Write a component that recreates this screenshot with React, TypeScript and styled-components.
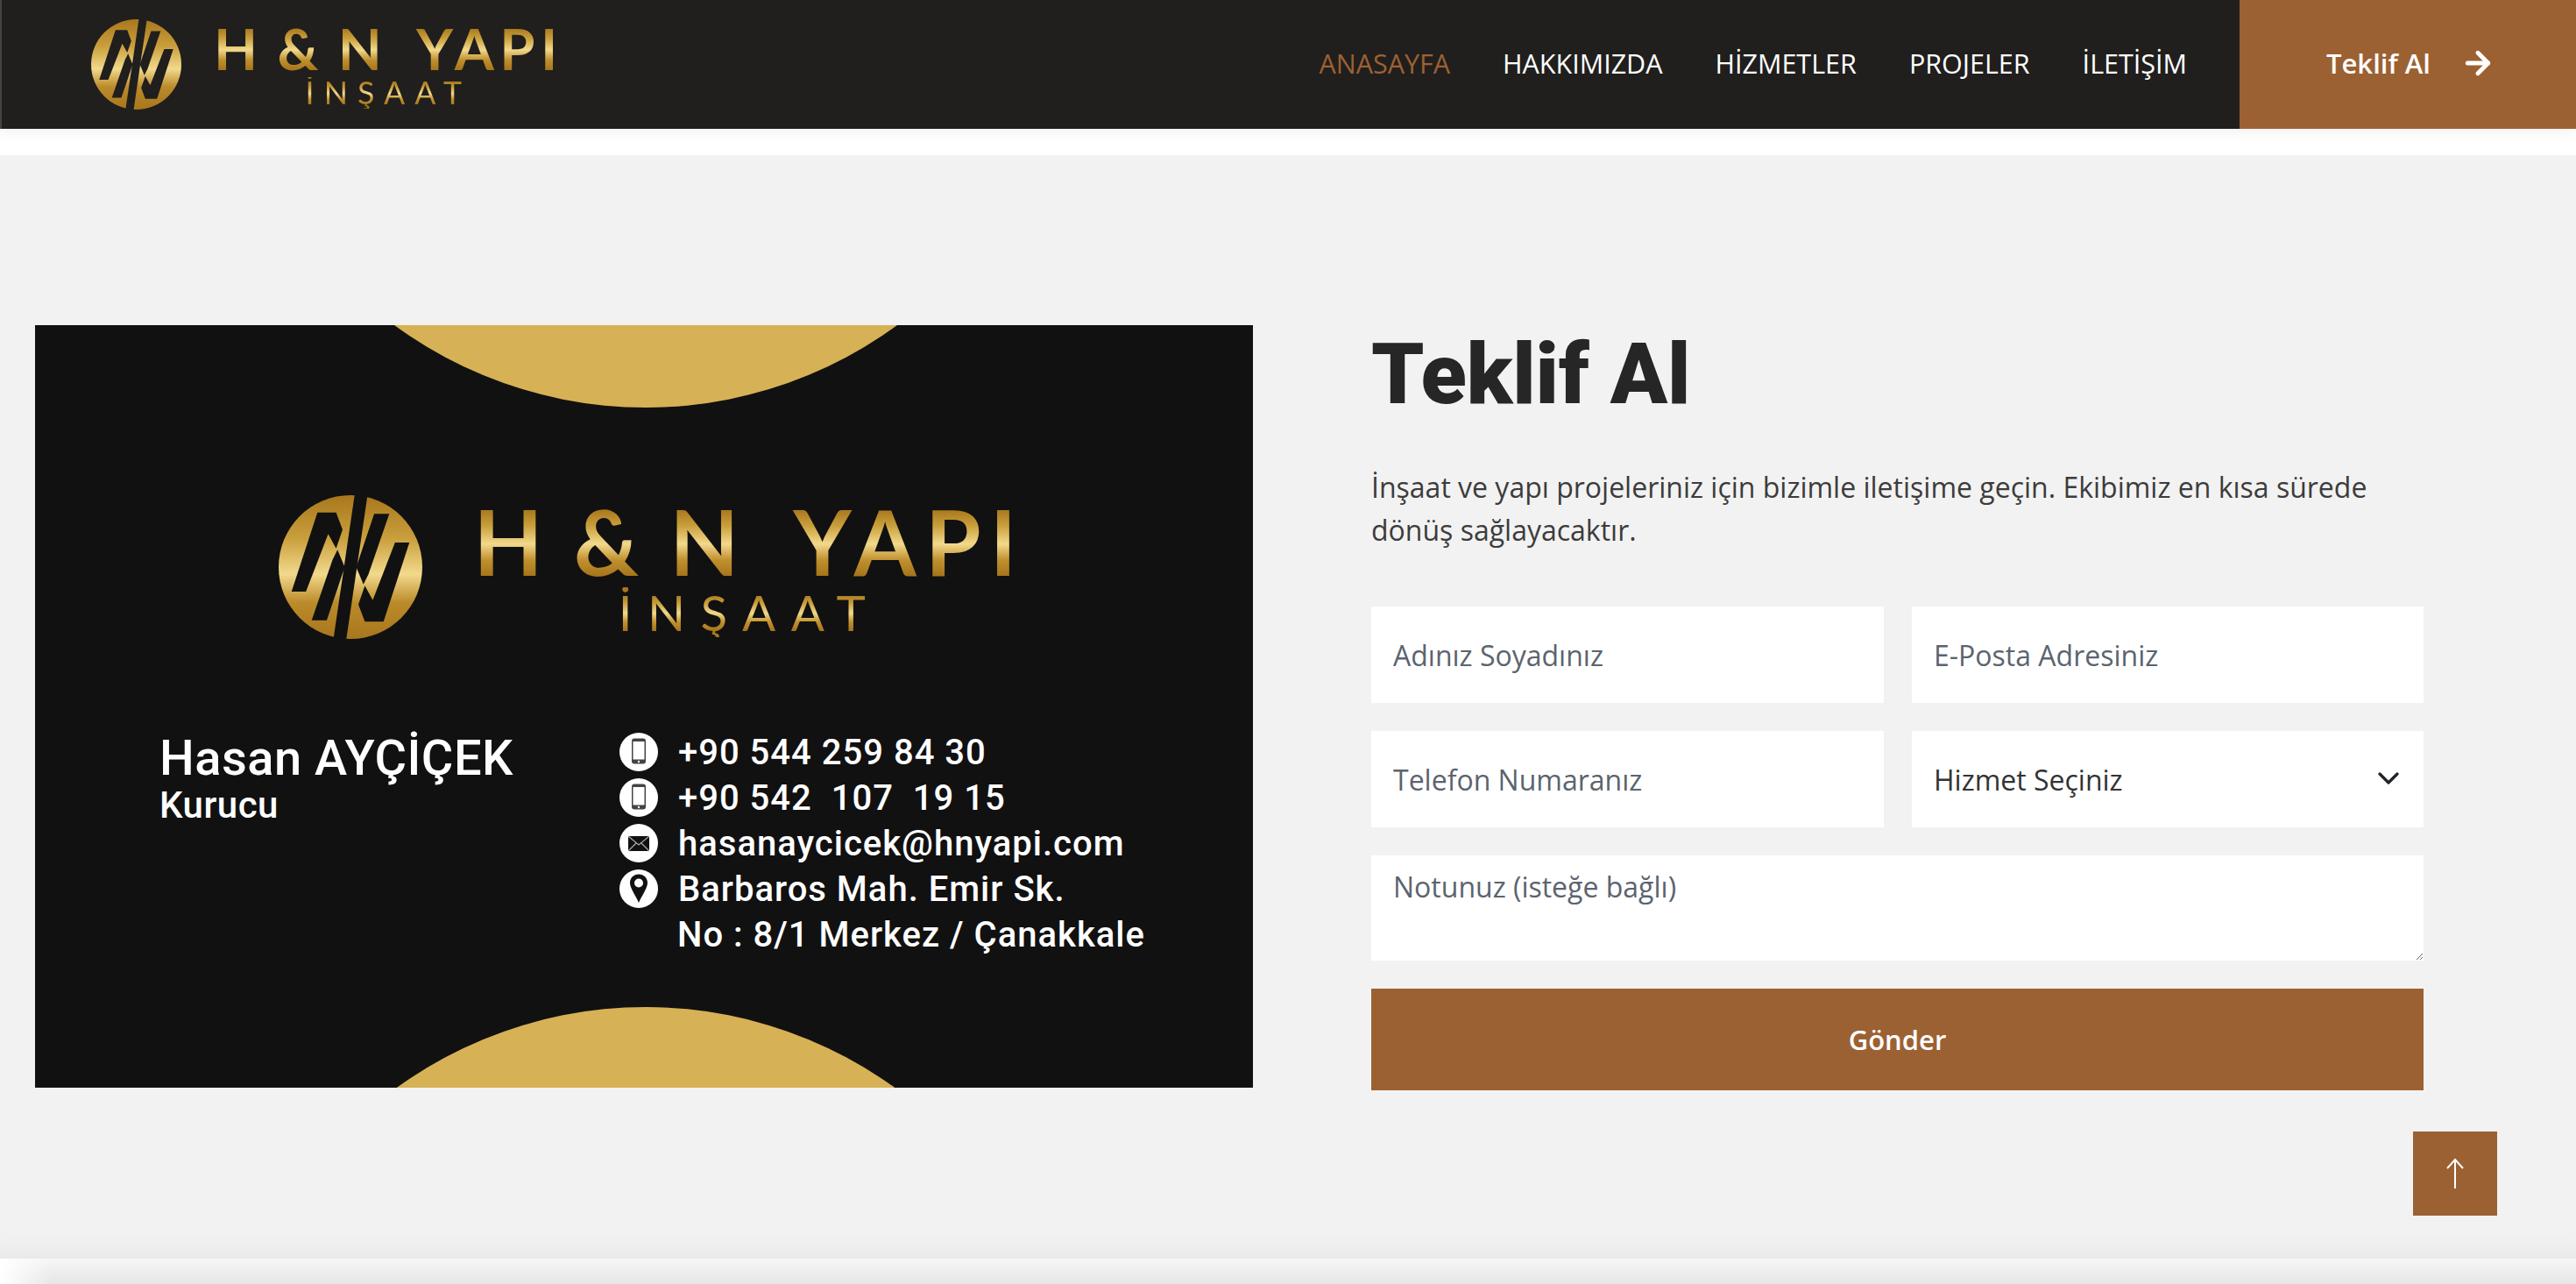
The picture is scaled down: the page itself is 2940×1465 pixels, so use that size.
import styled, { createGlobalStyle } from "styled-components";
import { ArrowRight, ChevronDown } from "lucide-react";

const GlobalStyle = createGlobalStyle`
  * {
    box-sizing: border-box;
  }
  html,
  body {
    margin: 0;
    height: 1465px;
    overflow: hidden;
    background: #fff;
    font-family: "Open Sans", "Liberation Sans", sans-serif;
  }
`;

const Page = styled.div`
  position: relative;
  height: 1465px;
  display: flex;
  flex-direction: column;
`;

const Header = styled.header`
  height: 147px;
  flex-shrink: 0;
  display: flex;
  align-items: center;
  background: #201f1d;
  border-left: 2px solid #444;
  padding-left: 102px;
  box-shadow: 0 4px 14px rgba(0, 0, 0, 0.06);
`;

const Nav = styled.nav`
  margin-left: auto;
  margin-right: 60px;
  margin-bottom: 3px;
  display: flex;
  gap: 60px;
`;

const NavLink = styled.a<{ $active?: boolean }>`
  font-size: 30.5px;
  font-weight: 500;
  color: ${(props) => (props.$active ? "#9c6133" : "#fff")};
  text-decoration: none;
`;

const QuoteLink = styled.a`
  width: 384px;
  height: 100%;
  padding: 0 0 3px 99px;
  display: flex;
  align-items: center;
  gap: 34px;
  background: #9c6133;
  color: #fff;
  font-size: 31px;
  font-weight: 600;
`;

const Section = styled.section`
  margin-top: 30px;
  flex: 1;
  display: flex;
  align-items: flex-start;
  gap: 135px;
  padding: 194px 0 0 40px;
  background: #f2f2f2;
  box-shadow: inset 0 -36px 36px -36px rgba(0, 0, 0, 0.07);
`;

const Card = styled.div`
  position: relative;
  width: 1390px;
  height: 870px;
  flex-shrink: 0;
  overflow: hidden;
  background: #111;
  padding: 194px 0 0 142px;
`;

const Moon = styled.div<{ $bottom?: boolean }>`
  position: absolute;
  left: 212px;
  width: 970px;
  height: 970px;
  border-radius: 50%;
  background: #d7b155;
  ${(props) => (props.$bottom ? "top: 778px;" : "top: -876px;")}
`;

const CardLogo = styled.div`
  margin-left: 136px;
`;

const LogoRow = styled.div<{ $scale: number }>`
  display: flex;
  align-items: center;
  gap: ${(props) => 37 * props.$scale}px;
`;

const LogoText = styled.div<{ $scale: number }>`
  display: flex;
  flex-direction: column;
  align-items: center;
  font-family: "Lato", "Liberation Sans", sans-serif;
  font-size: ${(props) => 65 * props.$scale}px;
  line-height: 1;
`;

const goldText = `
  background: linear-gradient(180deg, #a8771d 14%, #c99f3c 32%, #f2d98c 52%, #c0902e 70%, #a8771d 86%);
  -webkit-background-clip: text;
  background-clip: text;
  color: transparent;
`;

const LogoName = styled.span`
  ${goldText}
  font-weight: 700;
  letter-spacing: 0.1em;
  word-spacing: 0.2em;
  white-space: pre;
`;

const LogoTight = styled.span`
  word-spacing: -0.1em;
`;

const LogoSub = styled.span`
  ${goldText}
  font-size: 0.55em;
  font-weight: 400;
  letter-spacing: 0.31em;
`;

const InfoRow = styled.div`
  display: flex;
  margin-top: 105px;
  color: #fff;
`;

const Person = styled.div`
  width: 525px;
  font-family: "Roboto", "Liberation Sans", sans-serif;
  font-weight: 500;
`;

const PersonName = styled.div`
  font-size: 56px;
  line-height: 62px;
  letter-spacing: 0.5px;
`;

const PersonRole = styled.div`
  font-size: 42px;
  line-height: 45px;
  letter-spacing: 0.5px;
`;

const ContactList = styled.div`
  display: flex;
  flex-direction: column;
  margin-top: -2px;
`;

const ContactRow = styled.div`
  display: flex;
  align-items: center;
  height: 52px;
  gap: 23px;
  font-family: "Roboto", "Liberation Sans", sans-serif;
  font-size: 40px;
  font-weight: 500;
  letter-spacing: 1px;
  white-space: pre;
`;

const ContactContinuation = styled(ContactRow)`
  padding-left: 66px;
`;

const FormColumn = styled.div`
  width: 1201px;
  flex-shrink: 0;
`;

const Title = styled.h1`
  margin: 0;
  padding-top: 3px;
  font-family: "Roboto", "Liberation Sans", sans-serif;
  font-size: 96px;
  font-weight: 900;
  line-height: 106px;
  color: #262626;
`;

const Lead = styled.p`
  margin: 51px 0 63px;
  font-size: 32px;
  line-height: 49px;
  color: #3c3c3c;
`;

const FormGrid = styled.form`
  display: grid;
  grid-template-columns: 585px 584px;
  gap: 32px;
`;

const fieldBase = `
  width: 100%;
  border: none;
  border-radius: 0;
  outline: none;
  background: #fff;
  padding: 0 25px;
  font-family: "Open Sans", "Liberation Sans", sans-serif;
  font-size: 32px;
`;

const Field = styled.input`
  ${fieldBase}
  height: 110px;
  color: #495057;
  &::placeholder {
    color: #5b646e;
    opacity: 1;
  }
`;

const SelectWrap = styled.div`
  position: relative;
`;

const Select = styled.select`
  ${fieldBase}
  height: 110px;
  appearance: none;
  color: #333;
`;

const SelectArrow = styled.span`
  position: absolute;
  right: 20px;
  top: 34px;
  display: flex;
  color: #212529;
  pointer-events: none;
`;

const Note = styled.textarea`
  ${fieldBase}
  grid-column: 1 / -1;
  height: 120px;
  padding-top: 14px;
  resize: vertical;
  display: block;
  &::placeholder {
    color: #5b646e;
    opacity: 1;
  }
`;

const SubmitButton = styled.button`
  grid-column: 1 / -1;
  height: 116px;
  border: none;
  background: #9c6133;
  color: #fff;
  font-family: "Open Sans", "Liberation Sans", sans-serif;
  font-size: 31px;
  font-weight: 600;
`;

const ScrollTop = styled.a`
  position: absolute;
  right: 90px;
  top: 1291px;
  width: 96px;
  height: 96px;
  display: flex;
  align-items: center;
  justify-content: center;
  background: #9c6133;
  color: #fff;
`;

const BottomStrip = styled.div`
  height: 29px;
  flex-shrink: 0;
  background: linear-gradient(90deg, #fff 0, rgba(255, 255, 255, 0) 60px),
    linear-gradient(180deg, #f6f6f6, #e6e6e6);
`;

const InlineSvg = styled.svg`
  display: block;
  flex-shrink: 0;
`;

function LogoIcon({ id, size }: { id: string; size: number }) {
  const bg = id === "card" ? "#111" : "#201f1d";
  const shapes = (
    <>
      <polygon points="27,12 40,12 44.5,24 40,37 34.5,27 19,67 9,67" />
      <polygon points="23,87 33.5,87 46,50 41,38 37.5,45" />
    </>
  );
  return (
    <InlineSvg width={size} height={size} viewBox="0 0 100 100">
      <defs>
        <linearGradient id={id} x1="0" y1="0" x2="0" y2="1">
          <stop offset="0" stopColor="#a8771d" />
          <stop offset="0.3" stopColor="#c99f3c" />
          <stop offset="0.55" stopColor="#f2d98c" />
          <stop offset="0.75" stopColor="#bb8a2a" />
          <stop offset="1" stopColor="#a8771d" />
        </linearGradient>
      </defs>
      <circle cx="50" cy="50" r="50" fill={`url(#${id})`} />
      <g fill={bg}>
        <polygon points="53,-1 62,-1 47,101 38,101" />
        {shapes}
        <g transform="rotate(180 50 50)">{shapes}</g>
      </g>
    </InlineSvg>
  );
}

function Logo({ id, scale, iconSize }: { id: string; scale: number; iconSize: number }) {
  return (
    <LogoRow $scale={scale}>
      <LogoIcon id={id} size={iconSize} />
      <LogoText $scale={scale}>
        <LogoName>
          <LogoTight>H &amp; N</LogoTight> YAPI
        </LogoName>
        <LogoSub>İNŞAAT</LogoSub>
      </LogoText>
    </LogoRow>
  );
}

function PhoneIcon() {
  return (
    <InlineSvg width="44" height="44" viewBox="0 0 44 44">
      <circle cx="22" cy="22" r="22" fill="#fff" />
      <rect x="14" y="6.5" width="16" height="29" rx="3" fill="#444" />
      <rect x="15.5" y="10" width="13" height="20.5" fill="#fff" />
      <circle cx="22" cy="33" r="1.2" fill="#fff" />
    </InlineSvg>
  );
}

function MailIcon() {
  return (
    <InlineSvg width="44" height="44" viewBox="0 0 44 44">
      <circle cx="22" cy="22" r="22" fill="#fff" />
      <rect x="10" y="14" width="24" height="17" fill="#111" />
      <path d="M10 14l12 10 12-10M10 31l9-9M34 31l-9-9" fill="none" stroke="#aaa" strokeWidth="1.2" />
    </InlineSvg>
  );
}

function PinIcon() {
  return (
    <InlineSvg width="44" height="44" viewBox="0 0 44 44">
      <circle cx="22" cy="22" r="22" fill="#fff" />
      <path d="M22 5.500c5.800 0 10 4.300 10 9.800 0 5.800-5.600 13-10 22.700-4.400-9.700-10-16.900-10-22.700 0-5.500 4.200-9.800 10-9.800z" fill="#111" />
      <circle cx="22" cy="15.500" r="5" fill="#fff" />
    </InlineSvg>
  );
}

function App() {
  return (
    <Page>
      <GlobalStyle />
      <Header>
        <Logo id="head" scale={1} iconSize={103} />
        <Nav>
          <NavLink $active>ANASAYFA</NavLink>
          <NavLink>HAKKIMIZDA</NavLink>
          <NavLink>HİZMETLER</NavLink>
          <NavLink>PROJELER</NavLink>
          <NavLink>İLETİŞİM</NavLink>
        </Nav>
        <QuoteLink>
          Teklif Al
          <ArrowRight size={40} strokeWidth={3} />
        </QuoteLink>
      </Header>
      <Section>
        <Card>
          <Moon />
          <Moon $bottom />
          <CardLogo>
            <Logo id="card" scale={1.58} iconSize={164} />
          </CardLogo>
          <InfoRow>
            <Person>
              <PersonName>Hasan AYÇİÇEK</PersonName>
              <PersonRole>Kurucu</PersonRole>
            </Person>
            <ContactList>
              <ContactRow>
                <PhoneIcon />
                +90 544 259 84 30
              </ContactRow>
              <ContactRow>
                <PhoneIcon />
                {"+90 542  107  19 15"}
              </ContactRow>
              <ContactRow>
                <MailIcon />
                hasanaycicek@hnyapi.com
              </ContactRow>
              <ContactRow>
                <PinIcon />
                Barbaros Mah. Emir Sk.
              </ContactRow>
              <ContactContinuation>No : 8/1 Merkez / Çanakkale</ContactContinuation>
            </ContactList>
          </InfoRow>
        </Card>
        <FormColumn>
          <Title>Teklif Al</Title>
          <Lead>
            İnşaat ve yapı projeleriniz için bizimle iletişime geçin. Ekibimiz en kısa sürede dönüş
            sağlayacaktır.
          </Lead>
          <FormGrid>
            <Field placeholder="Adınız Soyadınız" />
            <Field placeholder="E-Posta Adresiniz" />
            <Field placeholder="Telefon Numaranız" />
            <SelectWrap>
              <Select defaultValue="">
                <option value="">Hizmet Seçiniz</option>
              </Select>
              <SelectArrow>
                <ChevronDown size={40} strokeWidth={2} />
              </SelectArrow>
            </SelectWrap>
            <Note placeholder="Notunuz (isteğe bağlı)" />
            <SubmitButton type="button">Gönder</SubmitButton>
          </FormGrid>
        </FormColumn>
      </Section>
      <BottomStrip />
      <ScrollTop>
        <InlineSvg width="24" height="36" viewBox="0 0 24 36">
          <path d="M12 35V2M3 12l9-10 9 10" fill="none" stroke="#fff" strokeWidth="2" />
        </InlineSvg>
      </ScrollTop>
    </Page>
  );
}

export default App;
